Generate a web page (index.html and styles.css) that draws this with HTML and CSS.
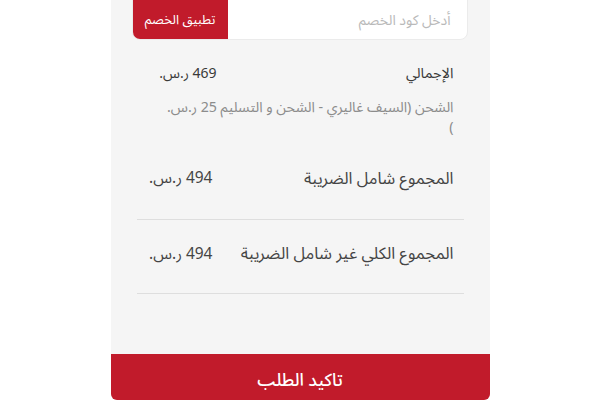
FILE: index.html
```
<!DOCTYPE html>
<html lang="ar" dir="rtl">
<head>
<meta charset="utf-8">
<link rel="stylesheet" href="styles.css">
</head>
<body>
<div class="card">
  <div class="coupon">
    <input class="coupon-input" type="text" placeholder="أدخل كود الخصم">
    <button class="coupon-btn">تطبيق الخصم</button>
  </div>
  <div class="summary">
    <div class="row row-sub">
      <span class="label">الإجمالي</span>
      <span class="value">469 ر.س.</span>
    </div>
    <div class="shipping">الشحن (السيف غاليري - الشحن و التسليم 25 ر.س.<br>)</div>
    <div class="row row-total row-first">
      <span class="label">المجموع شامل الضريبة</span>
      <span class="value">494 ر.س.</span>
    </div>
    <div class="row row-total row-second">
      <span class="label">المجموع الكلي غير شامل الضريبة</span>
      <span class="value">494 ر.س.</span>
    </div>
  </div>
  <button class="confirm">تاكيد الطلب</button>
</div>
</body>
</html>
```
FILE: styles.css
```
html, body {
  margin: 0;
  padding: 0;
  background: #fff;
}
body {
  font-family: "Noto Sans Arabic", "Noto Kufi Arabic", "DejaVu Sans", sans-serif;
  color: #444;
}
.card {
  width: 379px;
  margin: -8px auto 0;
  background: #f5f5f5;
  border-radius: 0 0 6px 6px;
  overflow: hidden;
  display: flex;
  flex-direction: column;
}
.coupon {
  margin: 0 22px 0 21px;
  height: 46px;
  display: flex;
  background: #fff;
  border: 1px solid #ebebeb;
  border-radius: 8px;
  overflow: hidden;
}
.coupon-input {
  flex: 1 1 auto;
  min-width: 0;
  width: 0;
  border: 0;
  outline: 0;
  background: transparent;
  font-family: inherit;
  font-size: 14px;
  padding: 8px 16px 0 0;
  color: #333;
  direction: rtl;
}
.coupon-input::placeholder {
  color: #b9b9b9;
}
.coupon-btn {
  flex: 0 0 95px;
  width: 95px;
  border: 0;
  background: #c11b2b;
  color: #fff;
  font-family: inherit;
  font-size: 13px;
  padding: 8px 0 0;
}
.summary {
  margin: 0 26px;
  padding-top: 18px;
  padding-bottom: 60px;
}
.row {
  display: grid;
  grid-template-columns: 1fr 70px;
  align-items: center;
  padding: 0 10px;
}
.row-sub {
  font-size: 14.5px;
  height: 30px;
  color: #3a3a3a;
}
.row-sub .value {
  font-size: 14px;
}
.shipping {
  font-size: 14.2px;
  color: #8c8c8c;
  padding: 9px 10px 0;
  line-height: 20px;
}
.row-total {
  font-size: 16.5px;
  grid-template-columns: 1fr 66px;
  border-bottom: 1px solid #dedede;
}
.row-total .value {
  font-size: 15.5px;
}
.row-first {
  height: 82px;
}
.row-second {
  height: 74px;
  padding-bottom: 6px;
  box-sizing: border-box;
}
.value {
  text-align: right;
}
.confirm {
  height: 46px;
  border: 0;
  background: #c11b2b;
  color: #fff;
  font-family: inherit;
  font-size: 17.5px;
  font-weight: 500;
  padding: 6px 0 0;
}
```
